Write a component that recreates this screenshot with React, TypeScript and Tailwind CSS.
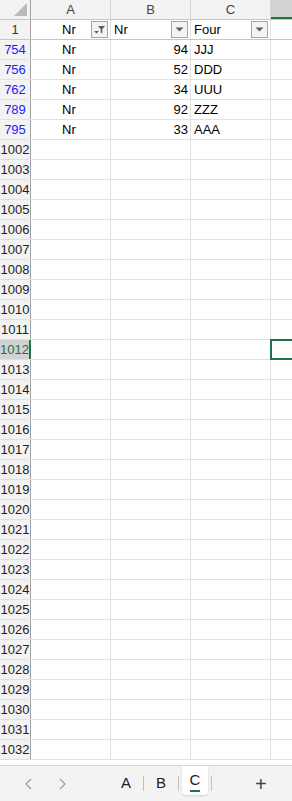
import React from 'react';

type Row = { n: string; hidden?: boolean; a?: string; b?: string; c?: string };

const rows: Row[] = [
  { n: '754', hidden: true, a: 'Nr', b: '94', c: 'JJJ' },
  { n: '756', hidden: true, a: 'Nr', b: '52', c: 'DDD' },
  { n: '762', hidden: true, a: 'Nr', b: '34', c: 'UUU' },
  { n: '789', hidden: true, a: 'Nr', b: '92', c: 'ZZZ' },
  { n: '795', hidden: true, a: 'Nr', b: '33', c: 'AAA' },
  ...Array.from({ length: 31 }, (_, i) => ({ n: String(1002 + i) })),
];

const FilterButton = ({ active }: { active?: boolean }) => (
  <div className="w-[17px] h-[17px] border border-[#a6a6a6] bg-[#f3f3f3] flex items-center justify-center">
    {active ? (
      <svg width="13" height="11" viewBox="0 0 13 11">
        <path d="M1 7h5l-2.5 2.5z" fill="#5f5f5f" />
        <path d="M5 2h7l-2.7 3.2v4.3l-1.6-1V5.2z" fill="#5f5f5f" />
      </svg>
    ) : (
      <svg width="9" height="5" viewBox="0 0 9 5">
        <path d="M0.5 0.5h8l-4 4z" fill="#5f5f5f" />
      </svg>
    )}
  </div>
);

const cell = 'h-full border-r border-[#e1e1e1] shrink-0';

export default function App() {
  return (
    <div
      className="w-[292px] h-[801px] bg-white overflow-hidden flex flex-col text-[13px] text-black"
      style={{ fontFamily: '"Liberation Sans", Arial, sans-serif' }}
    >
      <div className="flex-1 overflow-hidden">
        {/* column header */}
        <div className="flex h-[20px] bg-[#f3f3f3] border-b border-[#c6c6c6] text-[#444]">
          <div className="w-[31px] h-full border-r border-[#a0a0a0] shrink-0 relative">
            <svg className="absolute right-[3px] bottom-[3px]" width="13" height="13" viewBox="0 0 13 13">
              <path d="M13 0V13H0z" fill="#b9b9b9" />
            </svg>
          </div>
          <div className="w-[80px] h-full border-r border-[#d4d4d4] flex items-center justify-center">A</div>
          <div className="w-[80px] h-full border-r border-[#d4d4d4] flex items-center justify-center">B</div>
          <div className="w-[80px] h-full border-r border-[#d4d4d4] flex items-center justify-center">C</div>
          <div className="flex-1 h-full bg-[#d2d2d2] border-b-2 border-[#217346]" />
        </div>

        {/* header row 1 */}
        <div className="flex h-[20px] border-b border-[#c6c6c6]">
          <div className="w-[31px] h-full bg-[#f3f3f3] border-r border-[#a0a0a0] shrink-0 flex items-center justify-center text-[#333]">
            1
          </div>
          <div className={`${cell} w-[80px] flex items-center pl-[31px] pr-[2px]`}>
            <span className="flex-1">Nr</span>
            <FilterButton active />
          </div>
          <div className={`${cell} w-[80px] flex items-center pl-[3px] pr-[2px]`}>
            <span className="flex-1">Nr</span>
            <FilterButton />
          </div>
          <div className={`${cell} w-[80px] flex items-center pl-[3px] pr-[2px]`}>
            <span className="flex-1">Four</span>
            <FilterButton />
          </div>
          <div className="flex-1" />
        </div>

        {rows.map((r) => {
          const selected = r.n === '1012';
          return (
            <div key={r.n} className="flex h-[20px] border-b border-[#e1e1e1]">
              <div
                className={`w-[31px] h-full border-r shrink-0 flex items-center justify-center ${
                  selected
                    ? 'bg-[#d2d2d2] text-[#217346] border-r-2 border-[#217346]'
                    : 'bg-[#f3f3f3] border-[#a0a0a0]'
                } ${r.hidden ? 'text-[#2020ff]' : selected ? '' : 'text-[#222]'}`}
              >
                {r.n}
              </div>
              <div className={`${cell} w-[80px] flex items-center pl-[31px]`}>{r.a}</div>
              <div className={`${cell} w-[80px] flex items-center justify-end pr-[2px]`}>{r.b}</div>
              <div className={`${cell} w-[80px] flex items-center pl-[3px]`}>{r.c}</div>
              <div className="flex-1 relative">
                {selected && (
                  <div className="absolute left-[-1px] top-[-1px] right-[-2px] bottom-[-1px] border-2 border-[#217346]" />
                )}
              </div>
            </div>
          );
        })}
      </div>

      {/* sheet tabs */}
      <div className="h-[36px] shrink-0 bg-[#f3f3f3] border-t border-[#d4d4d4] flex items-center text-[15px] text-[#222] relative">
        <span className="absolute left-[24px]">
          <svg width="10" height="14" viewBox="0 0 10 14">
            <path d="M7 2L2 7l5 5" stroke="#9a9a9a" strokeWidth="1.2" fill="none" />
          </svg>
        </span>
        <span className="absolute left-[57px]">
          <svg width="10" height="14" viewBox="0 0 10 14">
            <path d="M3 2l5 5-5 5" stroke="#9a9a9a" strokeWidth="1.2" fill="none" />
          </svg>
        </span>
        <div className="ml-[121px] flex items-center h-full">
          <span>A</span>
          <span className="ml-[12px] w-px h-[15px] bg-[#c0c0c0]" />
          <span className="ml-[12px]">B</span>
          <span className="ml-[12px] w-px h-[15px] bg-[#c0c0c0]" />
          <div className="ml-[3px] self-start w-[26px] h-[29px] bg-white rounded-b-[4px] flex flex-col items-center justify-center shadow-[0_1px_2px_rgba(0,0,0,0.15)]">
            <span className="leading-none mt-[2px]">C</span>
            <span className="mt-[3px] w-[10px] h-[2px] bg-[#217346]" />
          </div>
          <span className="ml-[3px] w-px h-[15px] bg-[#c0c0c0]" />
          <span className="ml-[43px] text-[20px] font-light text-[#444]">+</span>
        </div>
      </div>
    </div>
  );
}
